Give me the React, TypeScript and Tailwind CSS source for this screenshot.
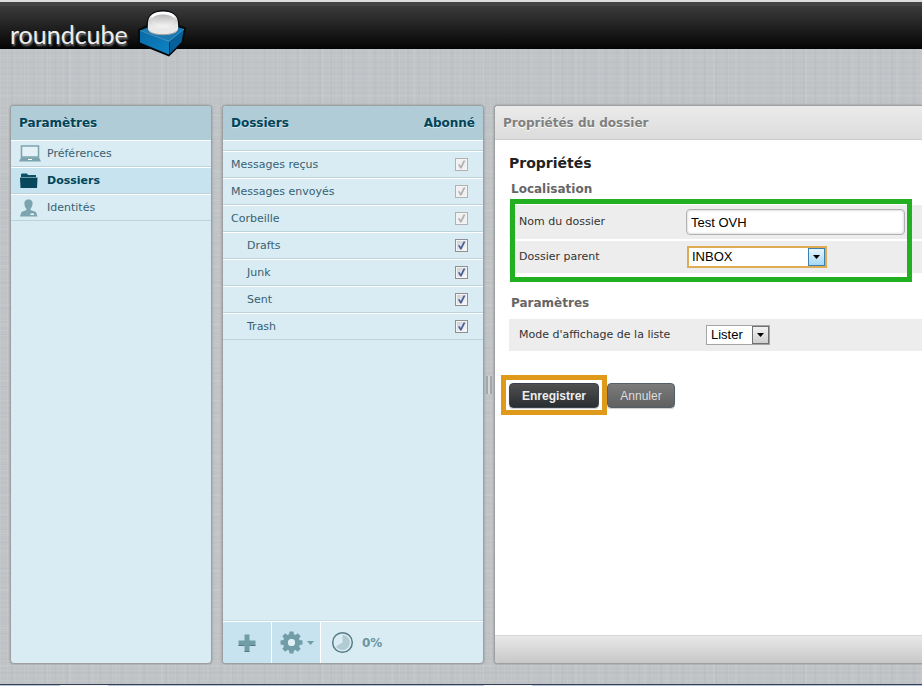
import { useState } from 'react';
import type { ReactNode } from 'react';

const folders = [
  { name: 'Messages reçus', locked: true, nested: false },
  { name: 'Messages envoyés', locked: true, nested: false },
  { name: 'Corbeille', locked: true, nested: false },
  { name: 'Drafts', locked: false, nested: true },
  { name: 'Junk', locked: false, nested: true },
  { name: 'Sent', locked: false, nested: true },
  { name: 'Trash', locked: false, nested: true },
];

function CubeLogo() {
  return (
    <svg width="50" height="48" viewBox="0 0 50 48" aria-hidden="true">
      <defs>
        <linearGradient id="ball" x1="0" y1="0" x2="0" y2="1">
          <stop offset="0" stopColor="#ffffff" />
          <stop offset="0.4" stopColor="#d0d0d0" />
          <stop offset="0.7" stopColor="#f2f2f2" />
          <stop offset="1" stopColor="#8d8d8d" />
        </linearGradient>
        <linearGradient id="dish" x1="0" y1="0" x2="0" y2="1">
          <stop offset="0" stopColor="#b9b9b9" />
          <stop offset="1" stopColor="#f4f4f4" />
        </linearGradient>
        <linearGradient id="front" x1="0" y1="0" x2="1" y2="1">
          <stop offset="0" stopColor="#0a6aa6" />
          <stop offset="1" stopColor="#0d84c6" />
        </linearGradient>
      </defs>
      <path d="M1 20 L9.500 16 C9.500 6 17 1 26 1 C35 1 42.500 6 42.500 16 L49 18.500 L46 34 L32 47.500 L1 35 Z" fill="#060b0e" />
      <path d="M3 21.500 L12 18 H40 L47 20 L32 33 Z" fill="#1c7ab3" />
      <path d="M3 22 L32 33 V45.500 L3 33.500 Z" fill="url(#front)" />
      <path d="M32.500 33 L47 20 L44.500 33 L32.500 45 Z" fill="#06609a" />
      <path d="M3 21.700 L32 32.500 L47 20" fill="none" stroke="#4aa9dc" strokeWidth="0.800" />
      <path d="M11 17 C10 6 17 2.500 26 2.500 C35 2.500 42 6 41 17 C41 20 40.500 21 40 22 C36 27 16 27 12 22 C11.500 21 11 20 11 17 Z" fill="url(#ball)" />
      <path d="M11 15 C15 20.500 37 20.500 41 15 C41.500 18 41 20 40 22 C36 27 16 27 12 22 C11 20 10.500 18 11 15 Z" fill="#e9e9e9" />
      <path d="M12 22 C16 27 36 27 40 22" fill="none" stroke="#9c9c9c" />
      <ellipse cx="26" cy="11.500" rx="12" ry="6" fill="url(#dish)" />
      <path d="M15 8 C18 2.500 34 2.500 37 8" fill="none" stroke="#fff" strokeWidth="2" />
    </svg>
  );
}

function LaptopIcon() {
  return (
    <svg width="22" height="17" viewBox="0 0 22 17" aria-hidden="true">
      <path d="M2.500 1 H19.500 V12 H2.500 Z" fill="#e4f2f7" stroke="#7ba4ae" strokeWidth="1.500" />
      <path d="M2 12.500 H20 L22 16.500 H0 Z" fill="#7ba4ae" />
      <path d="M9 14 H13 V15 H9 Z" fill="#fff" />
    </svg>
  );
}

function FolderIcon() {
  return (
    <svg width="20" height="16" viewBox="0 0 20 16" aria-hidden="true">
      <path d="M2 3 V1 L3 0.500 H8 L9 2 H17 V4 H2 Z" fill="#0c5164" />
      <path d="M1 5 H18.500 L18 15 H1.500 Z" fill="#07475c" />
      <path d="M1 4.500 H18.500" stroke="#6b9baa" />
    </svg>
  );
}

function PersonIcon() {
  return (
    <svg width="20" height="18" viewBox="0 0 20 18" aria-hidden="true">
      <path d="M9.500 0.500 C12.500 0.500 14 2.500 13.500 5.500 C13.200 8 12 9 11.500 10 V11 L17 13 L18.500 17.500 H1 L2.500 13 L7.500 11 V10 C6.500 9 5.800 8 5.500 5.500 C5 2.500 6.500 0.500 9.500 0.500 Z" fill="#7ba4ae" />
      <path d="M11.500 14.500 H15 V16 H11.500 Z" fill="#eef7fa" />
    </svg>
  );
}

function GearIcon() {
  return (
    <svg width="23" height="23" viewBox="-11.500 -11.500 23 23" aria-hidden="true">
      <g fill="#709da8">
        {[0, 45, 90, 135, 180, 225, 270, 315].map((angle) => (
          <path key={angle} d="M-2.700 -6 L-2 -11 H2 L2.700 -6 Z" transform={'rotate(' + angle + ')'} />
        ))}
      </g>
      <circle r="6" fill="none" stroke="#709da8" strokeWidth="5" />
      <circle r="3.500" fill="#e0f0f6" />
    </svg>
  );
}

function QuotaIcon() {
  return (
    <svg width="23" height="23" viewBox="0 0 23 23" aria-hidden="true">
      <circle cx="11.500" cy="11.500" r="9.800" fill="#d9ecf3" stroke="#577b86" strokeWidth="1.500" />
      <path d="M11.500 11.500 V4 A7.500 7.500 0 1 1 5 15.500 Z" fill="#b2cad2" />
    </svg>
  );
}

function Panel({ className, children }: { className: string; children: ReactNode }) {
  return (
    <section className={'flex flex-col overflow-hidden border-[#9d9fa1] shadow-[0_0_2px_rgba(0,0,0,0.3)] ' + className}>
      {children}
    </section>
  );
}

function FolderRow({ name, locked, nested }: { name: string; locked: boolean; nested: boolean }) {
  const [checked, setChecked] = useState(true);
  return (
    <li>
      <label
        className={
          'flex h-[27px] items-center justify-between border-t border-b border-t-white border-b-[#bbd3da] pr-[15px] ' +
          (nested ? 'pl-6' : 'pl-2')
        }
      >
        {name}
        <span className="grid">
          <input
            type="checkbox"
            checked={checked}
            disabled={locked}
            onChange={(event) => setChecked(event.target.checked)}
            className="col-start-1 row-start-1 size-[13px] appearance-none border border-[#8e8f8f] bg-linear-to-br from-[#c6cbd3] to-white shadow-[inset_0_0_0_1px_#f4f4f4] disabled:border-[#b1b1b1] disabled:from-[#f0f0f0] disabled:to-[#f0f0f0]"
          />
          {checked && (
            <svg className="pointer-events-none col-start-1 row-start-1" width="13" height="13" viewBox="0 0 13 13" aria-hidden="true">
              <path d="M3 6.500 L4.500 6 L5.800 8 L8.500 2.500 H10.500 L6.500 10.500 H5.200 Z" fill={locked ? '#b1b1b1' : '#4a5f97'} />
            </svg>
          )}
        </span>
      </label>
    </li>
  );
}

function SelectArrow({ className }: { className: string }) {
  return (
    <span className={'pointer-events-none col-start-1 row-start-1 flex items-center justify-center self-stretch justify-self-end border ' + className}>
      <svg width="7" height="4" viewBox="0 0 7 4" aria-hidden="true">
        <path d="M0 0 H7 L3.500 4 Z" fill="#000" />
      </svg>
    </span>
  );
}

export default function App() {
  const [folderName, setFolderName] = useState('Test OVH');

  return (
    <div className="flex h-screen flex-col overflow-hidden bg-[#bfc3c6] bg-[repeating-linear-gradient(90deg,rgba(255,255,255,0.05)_0_1px,transparent_1px_7px),repeating-linear-gradient(90deg,rgba(80,90,100,0.03)_0_2px,transparent_2px_11px),repeating-linear-gradient(90deg,rgba(255,255,255,0.05)_0_2px,transparent_2px_23px),repeating-linear-gradient(0deg,rgba(255,255,255,0.06)_0_1px,transparent_1px_5px),repeating-linear-gradient(0deg,rgba(80,90,100,0.03)_0_1px,transparent_1px_13px),repeating-linear-gradient(0deg,rgba(255,255,255,0.05)_0_2px,transparent_2px_19px)] font-['DejaVu_Sans',Verdana,sans-serif] text-[11px] leading-4 text-[#376172]">
      <header className="h-[49px] shrink-0 border-t-2 border-[#dedede] bg-[linear-gradient(#404040,#040404)]">
        <div className="flex items-start border-t-4 border-[#454545] pl-[10px]">
          <h1 className="pt-3 font-['Lato',sans-serif] text-[25px] leading-8 text-[#eee] [text-shadow:1px_2px_2px_#777]">roundcube</h1>
          <div className="relative z-10 -mb-4 ml-[9px] pt-[3px]">
            <CubeLogo />
          </div>
        </div>
      </header>

      <main className="flex min-h-0 flex-1 pt-14 pb-5 pl-[10px]">
        <Panel className="w-[202px] shrink-0 rounded border bg-[#d9ecf3]">
          <h2 className="h-[34px] bg-[#b0ccd7] px-2 pt-[9px] text-[12px] font-bold text-[#004458] [text-shadow:0_1px_1px_#d6eaf3]">Paramètres</h2>
          <nav>
            <a href="#preferences" className="flex h-[27px] items-center border-t border-b border-t-white border-b-[#bbd3da] pl-2">
              <span className="w-7"><LaptopIcon /></span>
              Préférences
            </a>
            <a href="#dossiers" className="flex h-[27px] items-center border-t border-b border-t-white border-b-[#bbd3da] bg-[#c7e3ef] pl-2 font-bold text-[#004458]">
              <span className="w-7"><FolderIcon /></span>
              Dossiers
            </a>
            <a href="#identites" className="flex h-[27px] items-center border-t border-b border-t-white border-b-[#bbd3da] pl-2">
              <span className="w-7"><PersonIcon /></span>
              Identités
            </a>
          </nav>
        </Panel>

        <Panel className="ml-[10px] w-[262px] shrink-0 rounded border bg-[#d9ecf3]">
          <div className="flex h-[34px] justify-between bg-[#b0ccd7] px-2 pt-[9px] text-[12px] font-bold text-[#004458] [text-shadow:0_1px_1px_#d6eaf3]">
            <h2>Dossiers</h2>
            <span>Abonné</span>
          </div>
          <ul className="flex-1">
            <li className="h-[11px] border-t border-b border-t-white border-b-[#bbd3da]" />
            {folders.map((folder) => (
              <FolderRow key={folder.name} {...folder} />
            ))}
          </ul>
          <footer className="flex h-[43px] shrink-0 border-t border-[#c6dde5]">
            <div className="flex flex-1 border-t border-white">
              <button aria-label="Créer un dossier" className="flex w-[49px] items-center justify-center border-r border-white bg-[#c7e3ef]">
                <svg width="18" height="18" viewBox="0 0 18 18" aria-hidden="true">
                  <path d="M6.500 0.500 H11.500 V6.500 H17.500 V11.500 H11.500 V17.500 H6.500 V11.500 H0.500 V6.500 H6.500 Z" fill="#709da8" />
                  <path d="M0.500 11.500 H6.500 M11.500 11.500 H17.500 M6.500 17.500 H11.500" stroke="#527985" />
                </svg>
              </button>
              <button aria-label="Actions" className="flex w-[49px] items-center justify-center gap-1 border-r border-white bg-[#c7e3ef] pl-[2px]">
                <GearIcon />
                <svg width="7" height="4" viewBox="0 0 7 4" aria-hidden="true">
                  <path d="M0 0 H7 L3.500 4 Z" fill="#709da8" />
                </svg>
              </button>
              <div className="flex items-center gap-2 pl-[10px] text-[12px] font-bold text-[#6a95a2]">
                <QuotaIcon />
                0%
              </div>
            </div>
          </footer>
        </Panel>

        <div className="flex w-[10px] shrink-0 items-center justify-center">
          <div className="h-[18px] w-[6px] border-x-2 border-[#a2a7ab] bg-[#d4d7da]" />
        </div>

        <Panel className="min-w-0 flex-1 rounded-l border border-r-0 bg-white">
          <h2 className="h-[34px] shrink-0 border-b border-[#ccc] bg-linear-to-b from-[#ebebeb] to-[#dcdcdc] px-2 pt-[9px] text-[12px] font-bold text-[#808080] [text-shadow:0_1px_1px_#fff]">
            Propriétés du dossier
          </h2>
          <form className="min-h-0 flex-1 pt-[13px] pl-[14px] text-[#333]" onSubmit={(event) => event.preventDefault()}>
            <h3 className="text-[14px] leading-5 font-bold text-[#222]">Propriétés</h3>
            <fieldset className="mt-2">
              <legend className="pl-[2px] text-[12px] font-bold text-[#666]">Localisation</legend>
              <div className="relative mt-2">
                <div className="flex h-[34px] items-center bg-[#ededed] pl-[10px]">
                  <label htmlFor="folder-name" className="w-[167px]">Nom du dossier</label>
                  <input
                    id="folder-name"
                    value={folderName}
                    onChange={(event) => setFolderName(event.target.value)}
                    className="h-[26px] w-[219px] rounded border border-[#b2b2b2] bg-white px-1 font-['Liberation_Sans',Arial,sans-serif] text-[13px] text-black shadow-[inset_0_0_2px_1px_#e2e2e2]"
                  />
                </div>
                <div className="mt-[2px] flex h-8 items-center bg-[#ededed] pl-[10px]">
                  <label htmlFor="folder-parent" className="w-[168px]">Dossier parent</label>
                  <div className="grid w-[140px] border-2 border-[#dfab55] bg-white">
                    <select id="folder-parent" className="col-start-1 row-start-1 h-[18px] appearance-none pl-[3px] font-['Liberation_Sans',Arial,sans-serif] text-[13px] leading-[18px] text-black outline-none">
                      <option>INBOX</option>
                    </select>
                    <SelectArrow className="w-[17px] border-[#3c7fb1] bg-linear-to-b from-[#e8f5fd] to-[#a5d9f5]" />
                  </div>
                </div>
                <div className="pointer-events-none absolute -top-[6px] left-px h-[83px] w-[402px] border-5 border-[#22b022]" />
              </div>
            </fieldset>

            <fieldset className="mt-[22px]">
              <legend className="pl-[2px] text-[12px] font-bold text-[#666]">Paramètres</legend>
              <div className="mt-2 flex h-8 items-center bg-[#ededed] pl-[10px]">
                <label htmlFor="list-mode" className="w-[187px]">Mode d'affichage de la liste</label>
                <div className="grid w-16 border border-[#a5a5a5] bg-white">
                  <select id="list-mode" className="col-start-1 row-start-1 h-[18px] appearance-none pl-1 font-['Liberation_Sans',Arial,sans-serif] text-[13px] leading-[18px] text-black outline-none">
                    <option>Lister</option>
                  </select>
                  <SelectArrow className="w-[17px] border-[#707070] bg-linear-to-b from-[#f2f2f2] to-[#cfcfcf]" />
                </div>
              </div>
            </fieldset>

            <div className="mt-8 flex gap-2 font-['Liberation_Sans',Arial,sans-serif] text-[12px]">
              <div className="relative">
                <button className="h-[25px] w-[90px] rounded border border-[#3a434a] bg-linear-to-b from-[#505050] to-[#2a2e31] font-bold text-[#ededed] shadow-[0_1px_1px_#ccc]">Enregistrer</button>
                <div className="pointer-events-none absolute -top-2 -left-2 h-10 w-[106px] border-5 border-[#df9a1b]" />
              </div>
              <button type="button" className="h-[25px] w-[68px] rounded border border-[#52606b] bg-linear-to-b from-[#7b7b7b] to-[#606060] text-[#ddd] shadow-[0_1px_1px_#ccc]">Annuler</button>
            </div>
          </form>
          <footer className="h-7 shrink-0 border-t border-[#d5d5d5] bg-linear-to-b from-[#e8e8e8] to-[#c8c8c8]" />
        </Panel>
      </main>

      <div className="flex h-[2px] shrink-0 border-t border-[#343f54] bg-[#b4c3dc]">
        <div className="ml-[60px] h-px w-12 bg-[#f5f5f5]" />
        <div className="ml-[376px] h-px w-12 bg-[#f5f5f5]" />
      </div>
    </div>
  );
}
